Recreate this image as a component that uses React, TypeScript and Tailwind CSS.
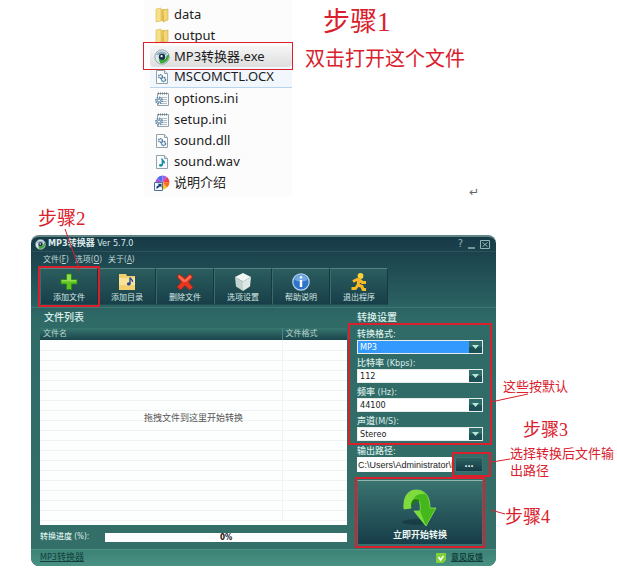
import type { ReactNode } from "react";
import clsx from "clsx";

const RED = "#d9202c";

function FolderIcon() {
  return (
    <svg width="16" height="16" viewBox="0 0 16 16">
      <path d="M2 2l5-1v13l-5 1z" fill="#f6e08a" stroke="#d9b84f" strokeWidth=".6" />
      <path d="M7 2h4v12H7z" fill="#e9c65c" />
      <path d="M9 3l5-1v11l-5 2z" fill="#f3d676" stroke="#d0a944" strokeWidth=".6" />
      <path d="M8 9l2-1v6H8z" fill="#dcb850" />
    </svg>
  );
}

function ConverterIcon({ size = 16 }: { size?: number }) {
  return (
    <svg width={size} height={size} viewBox="0 0 16 16">
      <circle cx="8" cy="8" r="7.2" fill="#dfe9ef" stroke="#8799a6" strokeWidth=".8" />
      <path d="M2 6a6.5 6.5 0 0 1 11-1l-3 2-5-1z" fill="#8fb0bf" />
      <circle cx="8" cy="8" r="3.2" fill="#17324a" />
      <circle cx="7.6" cy="7.2" r="1.1" fill="#fff" />
      <path d="M14.8 5c.8 5-2 9-7.5 9.6L6 13l2.500-2c2.500 0 4-1.500 3.800-4z" fill="#3ba936" />
      <path d="M6.500 14.500L4.500 10.500l5 .5z" fill="#3ba936" />
    </svg>
  );
}

function SheetIcon({ children }: { children: ReactNode }) {
  return (
    <svg width="16" height="16" viewBox="0 0 16 16">
      <path d="M2.500 1.500h8l3 3v10h-11z" fill="#fafcfd" stroke="#93a1ad" />
      <path d="M10.500 1.500v3h3" fill="#dbe3e9" stroke="#93a1ad" />
      {children}
    </svg>
  );
}

function GearsIcon() {
  return (
    <SheetIcon>
      <circle cx="6.500" cy="7.500" r="1.800" fill="none" stroke="#5a83a6" strokeWidth="1.500" strokeDasharray="1.3 .5" />
      <circle cx="9.500" cy="10.500" r="2" fill="none" stroke="#3f719c" strokeWidth="1.500" strokeDasharray="1.3 .5" />
    </SheetIcon>
  );
}

function IniIcon() {
  return (
    <svg width="16" height="16" viewBox="0 0 16 16">
      <path d="M3.500 2.500h11v12h-11z" fill="#f7fafb" stroke="#93a1ad" />
      <path d="M4 2.500h10" stroke="#6d7a85" strokeWidth="2" strokeDasharray="1 1" />
      <path d="M6 6.500h7M6 8.500h7M6 10.500h7M6 12.500h7" stroke="#b3bec7" />
      <circle cx="5" cy="9.500" r="3" fill="#e5edf3" stroke="#6089a9" strokeWidth="2" strokeDasharray="1.4 .9" />
      <circle cx="5" cy="9.500" r="1.500" fill="#fff" stroke="#6089a9" />
    </svg>
  );
}

function WavIcon() {
  return (
    <SheetIcon>
      <path d="M7.500 4.500c.5 2 3.300 2 2.800 5-.4-1.500-1.300-2-2-2.200v3.900" fill="none" stroke="#178ba8" strokeWidth="1.400" />
      <ellipse cx="6.800" cy="11.300" rx="1.800" ry="1.400" fill="#178ba8" />
    </SheetIcon>
  );
}

function ShortcutIcon() {
  return (
    <svg width="16" height="16" viewBox="0 0 16 16">
      <path d="M8.500 7.500V.5A7 7 0 0 1 13 2z" fill="#a65be0" />
      <path d="M8.500 7.500V.5a7 7 0 0 0-5.500 3z" fill="#4c6ff0" />
      <path d="M8.500 7.500L13 2a7 7 0 0 1 2.500 5z" fill="#f23a4a" />
      <path d="M8.500 7.500l7-.5a7 7 0 0 1-2.500 5.500z" fill="#ff6a1f" />
      <path d="M8.500 7.500l4.500 5a7 7 0 0 1-5 2z" fill="#ffc21d" />
      <path d="M8.500 7.500L3 3.500a7 7 0 0 0-1.500 4z" fill="#b04be0" />
      <path d="M.5 7.500h8v8h-8z" fill="#f4f8fc" stroke="#4d6f9d" />
      <path d="M2.500 14v-2.500L5 10 3.500 8.800h4v4L6.200 11.300z" fill="#143c86" />
    </svg>
  );
}

function AddIcon() {
  return (
    <svg width="18" height="18" viewBox="0 0 18 18">
      <path d="M6.500 1h5v5.500h5.500v4.500h-5.500v5.500h-5v-5.500H1V6.500h5.500z" fill="#5fc324" stroke="#2b8a12" strokeWidth=".8" />
      <path d="M7 1.500h4V7h5.500v1.500h-15V7H7z" fill="#a6e75f" opacity=".7" />
    </svg>
  );
}

function AddFolderIcon() {
  return (
    <svg width="18" height="18" viewBox="0 0 18 18">
      <path d="M1 1h7l1 2h8v14H1z" fill="#f1cf6c" />
      <path d="M1 5h16v12H1z" fill="#fbe49a" />
      <path d="M1 12h16v5H1z" fill="#eec75a" opacity=".7" />
      <path d="M12 4.500c.5 2 3 2 2.500 4.500M12 4.500v6" fill="none" stroke="#23479b" strokeWidth="1.400" />
      <ellipse cx="10.800" cy="10.800" rx="2" ry="1.600" fill="#23479b" />
    </svg>
  );
}

function DeleteIcon() {
  return (
    <svg width="18" height="18" viewBox="0 0 18 18">
      <path d="M3 1l6 4.500L14 1l3 3-4.500 5 4.500 5.500-3.500 2.500L9 12.500 4.500 17 1 14l4.500-5L1 4z" fill="#e8361f" stroke="#a81c10" strokeWidth=".6" />
      <path d="M3 2l6 5 5-5 1.500 2-5.500 5H7L2.500 4z" fill="#ff8568" opacity=".7" />
    </svg>
  );
}

function OptionsIcon() {
  return (
    <svg width="18" height="18" viewBox="0 0 18 18">
      <path d="M9 0l8 4-8 4.500L1 4z" fill="#f2f6f5" />
      <path d="M1 4l8 4.500V18l-7-4.500z" fill="#c4d2d0" />
      <path d="M17 4L9 8.500V18l7-4.500z" fill="#dfe8e6" />
    </svg>
  );
}

function InfoIcon() {
  return (
    <svg width="18" height="18" viewBox="0 0 18 18">
      <circle cx="9" cy="9" r="8.200" fill="#2e74c8" stroke="#b9d6f0" strokeWidth="1.200" />
      <path d="M2.500 7a6.700 6.700 0 0 1 13 0q-6 3-13 0z" fill="#8dbcec" opacity=".7" />
      <path d="M9 3.200v2.200M9 7v7" stroke="#fff" strokeWidth="2.400" />
    </svg>
  );
}

function ExitIcon() {
  return (
    <svg width="18" height="18" viewBox="0 0 18 18">
      <circle cx="10.500" cy="3" r="2.900" fill="#ffd23c" />
      <path d="M3 8.500L7 6.500l3 1 2.500 2h3.500M9 7l-1 5 4 1.500 1 3h3M8 12l-2.500 3.500H1.500" fill="none" stroke="#fbb923" strokeWidth="3" strokeLinejoin="round" />
    </svg>
  );
}

function StartArrow() {
  return (
    <svg width="36" height="38" viewBox="0 0 36 38">
      <ellipse cx="14" cy="33" rx="14" ry="3" fill="#12343b" opacity=".6" />
      <path d="M2 20C1 8 6 1 14 1c10 0 14 7 14 18h6L24 37 12 22h6c1-8-1-12-4-12-4 0-5 4-5 9z" fill="#44b81b" stroke="#8fe355" strokeWidth=".8" />
      <path d="M2 20C1 8 6 1 14 1c4 0 7 1.500 9 4.500C17 4 13 6 11 11c-2 2-2 5-2 8z" fill="#7fdc3c" />
      <path d="M9 19c0-6 1-9 5-9 2 0 3 1 3.500 3-4-1.500-6 1-8.500 6z" fill="#1f7a12" />
      <path d="M24 37L12 22h6z" fill="#78dd3d" />
    </svg>
  );
}

const files: { name: string; icon: ReactNode; look?: "picked" | "hovered" }[] = [
  { name: "data", icon: <FolderIcon /> },
  { name: "output", icon: <FolderIcon /> },
  { name: "MP3转换器.exe", icon: <ConverterIcon />, look: "picked" },
  { name: "MSCOMCTL.OCX", icon: <GearsIcon />, look: "hovered" },
  { name: "options.ini", icon: <IniIcon /> },
  { name: "setup.ini", icon: <IniIcon /> },
  { name: "sound.dll", icon: <GearsIcon /> },
  { name: "sound.wav", icon: <WavIcon /> },
  { name: "说明介绍", icon: <ShortcutIcon /> },
];

const tools = [
  { name: "添加文件", icon: <AddIcon />, marked: true },
  { name: "添加目录", icon: <AddFolderIcon /> },
  { name: "删除文件", icon: <DeleteIcon /> },
  { name: "选项设置", icon: <OptionsIcon /> },
  { name: "帮助说明", icon: <InfoIcon /> },
  { name: "退出程序", icon: <ExitIcon /> },
];

const settings = [
  { id: "format", label: "转换格式:", options: ["MP3", "WAV", "WMA", "OGG"], active: true },
  { id: "bitrate", label: "比特率 (Kbps):", options: ["112", "128", "192", "320"] },
  { id: "frequency", label: "频率 (Hz):", options: ["44100", "22050", "48000"] },
  { id: "channel", label: "声道(M/S):", options: ["Stereo", "Mono"] },
];

function Step({ n, className }: { n: number; className?: string }) {
  return (
    <h2 className={clsx("font-['Liberation_Serif','Noto_Sans_CJK_SC',serif] font-normal whitespace-nowrap text-[#d9202c]", className)}>
      步骤{n}
    </h2>
  );
}

function FileList() {
  return (
    <ul className="w-[148px] shrink-0 bg-[#fcfcfc] pt-1 pb-1 font-['Noto_Sans','Noto_Sans_CJK_SC',sans-serif] text-[13px] text-[#1c1c1c]">
      {files.map((f) => (
        <li
          key={f.name}
          className={clsx(
            "relative ml-[6px] flex h-[21px] items-center gap-1 pl-1 whitespace-nowrap",
            f.look === "picked" && "z-10 rounded-sm bg-linear-to-b from-[#f6f6f6] to-[#dedede]",
            f.look === "hovered" && "border-b border-[#b9d5ee] bg-[#f1f7fd]",
          )}
        >
          {f.icon}
          <span>{f.name}</span>
          {f.look === "picked" && <span className="absolute -top-1 -right-px -bottom-[3px] -left-[7px] border border-[#d9202c]" />}
        </li>
      ))}
    </ul>
  );
}

function Toolbar() {
  return (
    <div className="flex h-[41px] items-center pl-[9px]">
      {tools.map((t) => (
        <button
          key={t.name}
          className={clsx(
            "relative flex h-[37px] w-[58px] flex-col items-center justify-between border border-t-[#54827f] border-r-[#16393f] border-b-[#214e51] border-l-[#3b6a6b] bg-linear-to-b from-[#2b5d5e] to-[#183f49] pt-1 text-[8px] leading-[13px] text-[#d5e8e3]",
            t.marked && "z-10",
          )}
        >
          {t.icon}
          <span>{t.name}</span>
          {t.marked && <span className="absolute -inset-[3px] border-2 border-[#d9202c]" />}
        </button>
      ))}
    </div>
  );
}

function FileTable() {
  return (
    <div className="relative flex-1 bg-[#fdfefe]">
      <table className="w-full table-fixed border-collapse">
        <thead>
          <tr className="h-3 bg-linear-to-b from-[#37766f] to-[#1b454c] text-left text-[8px] leading-3 text-[#b9d5d0]">
            <th className="p-0 pl-[3px] font-normal">文件名</th>
            <th className="w-[65px] border-l border-[#4c8580] p-0 pl-[3px] font-normal">文件格式</th>
          </tr>
        </thead>
        <tbody>
          {Array.from({ length: 18 }, (_, i) => (
            <tr key={i} className="h-[10px] border-b border-[#f0f3f3]">
              <td className="p-0" />
              <td className="border-l border-[#f0f3f3] p-0" />
            </tr>
          ))}
        </tbody>
      </table>
      <p className="absolute inset-x-0 top-[84px] text-center text-[9px] leading-3 text-[#555]">拖拽文件到这里开始转换</p>
    </div>
  );
}

function Settings() {
  return (
    <div className="flex w-[126px] shrink-0 flex-col pb-1">
      <h3 className="h-5 text-[10px] leading-5 font-medium text-[#dcefe9]">转换设置</h3>
      <div className="relative flex flex-col gap-[3px]">
        {settings.map((s) => (
          <div key={s.id}>
            <label htmlFor={s.id} className="block h-3 text-[9px] leading-3 font-medium text-[#d9ede8]">
              {s.label}
            </label>
            <div className="relative">
              <select
                id={s.id}
                className={clsx(
                  "block h-[14px] w-full appearance-none border border-[#e5ecea] pr-4 pl-[2px] text-[9px] leading-3",
                  s.active ? "bg-[#3399ff] text-white" : "bg-white text-[#222]",
                )}
              >
                {s.options.map((o) => (
                  <option key={o}>{o}</option>
                ))}
              </select>
              <svg className="pointer-events-none absolute top-px right-px" width="13" height="12" viewBox="0 0 13 12">
                <path d="M0 0h13v12H0z" fill="#1d5055" />
                <path d="M0 0h13v6H0z" fill="#2f6b69" />
                <path d="M3 4h7L6.500 8z" fill="#b9e5d4" />
              </svg>
            </div>
          </div>
        ))}
        <span className="pointer-events-none absolute -inset-x-[9px] -top-[5px] -bottom-[4px] border-2 border-[#d9202c]" />
      </div>
      <label htmlFor="path" className="mt-1 block h-3 text-[9px] leading-3 font-medium text-[#d9ede8]">
        输出路径:
      </label>
      <div className="flex h-[15px] justify-between">
        <input
          id="path"
          className="h-[15px] w-[95px] bg-white pl-px font-['Liberation_Sans',sans-serif] text-[9px] text-[#222]"
          defaultValue="C:\Users\Administrator\Desktop"
        />
        <button className="relative h-[15px] w-7 border border-[#3f7371] bg-linear-to-b from-[#2d6262] to-[#153b45] text-[9px] leading-[11px] font-bold text-white">
          ...
          <span className="absolute -inset-y-[6px] -right-[9px] -left-1 border-2 border-[#d9202c]" />
        </button>
      </div>
      <button className="relative mt-2 flex h-[65px] flex-col items-center justify-end border border-[#3b6e6e] border-t-[#8fb5ae] bg-linear-to-b from-[#3a7470] to-[#173d49] text-[9px] leading-[17px] font-bold text-[#eef8f5]">
        <StartArrow />
        立即开始转换
        <span className="absolute -inset-x-[3px] -inset-y-[4px] border-2 border-[#d9202c]" />
      </button>
    </div>
  );
}

function ConverterWindow() {
  return (
    <section className="min-w-[465px] flex-1 overflow-hidden rounded-lg border-t-2 border-[#5f8585] bg-linear-to-b from-[#173a47] via-[#2f6a67] via-25% to-[#356f69] font-['DejaVu_Sans_Condensed','Noto_Sans_CJK_SC',sans-serif]">
      <header className="flex h-[15px] items-center gap-[2px] border-b border-[#2a5459] pr-[6px] pl-1 text-[9px] text-[#dbe8e8]">
        <ConverterIcon size={11} />
        <h1 className="flex-1">
          <span className="font-bold">MP3转换器</span> Ver 5.7.0
        </h1>
        <div className="flex gap-1 text-[#8fb5b3]">
          <button aria-label="帮助" className="text-[11px] leading-3">?</button>
          <button aria-label="最小化">
            <svg width="9" height="10" viewBox="0 0 9 10"><path d="M1 9h7" stroke="currentColor" strokeWidth="1.500" /></svg>
          </button>
          <button aria-label="关闭">
            <svg width="10" height="10" viewBox="0 0 10 10" fill="none" stroke="currentColor"><path d="M.5 1.500h9v8h-9zM2.500 3.500l5 4M7.500 3.500l-5 4" /></svg>
          </button>
        </div>
      </header>
      <nav className="flex h-[14px] gap-[6px] pl-3 text-[8px] leading-[13px] text-[#c3d8d6]">
        <button>文件(<u>F</u>)</button>
        <button>选项(<u>O</u>)</button>
        <button>关于(<u>A</u>)</button>
      </nav>
      <Toolbar />
      <div className="flex gap-[10px] border-t border-[#3f7773] pr-[13px] pl-[9px]">
        <div className="flex min-w-0 flex-1 flex-col">
          <h3 className="h-5 pl-1 text-[10px] leading-5 font-medium text-[#dcefe9]">文件列表</h3>
          <FileTable />
          <div className="flex h-6 items-center gap-2 text-[8px] font-medium text-[#dcefe9]">
            <span className="w-[57px] whitespace-nowrap">转换进度 (%):</span>
            <div role="progressbar" aria-valuenow={0} className="h-[9px] flex-1 bg-white text-center text-[8px] leading-[9px] font-bold text-[#111]">
              0%
            </div>
          </div>
        </div>
        <Settings />
      </div>
      <footer className="flex h-[17px] items-center justify-between border-t border-[#4f9386] bg-linear-to-b from-[#3c8276] to-[#499182] pr-[13px] pl-[9px] text-[9px] text-[#123f3c]">
        <a href="#home" className="underline">MP3转换器</a>
        <a href="#feedback" className="flex items-center gap-[5px] text-[8px] font-bold underline">
          <svg width="10" height="10" viewBox="0 0 10 10">
            <path d="M0 0h10v7l-3 3H0z" fill="#7fd13a" />
            <path d="M2.500 4l2 3 3-4" fill="none" stroke="#fff" strokeWidth="1.600" />
          </svg>
          意见反馈
        </a>
      </footer>
    </section>
  );
}

export default function App() {
  return (
    <main lang="zh-CN" className="min-h-[575px] bg-white">
      <div className="flex h-[197px] pl-36">
        <FileList />
        <div className="flex flex-1 flex-col pt-1 pl-[13px]">
          <Step n={1} className="pl-[18px] text-[27px] leading-9" />
          <p className="pt-[7px] font-['Liberation_Serif','Noto_Sans_CJK_SC',serif] text-[20px] leading-6 whitespace-nowrap text-[#d9202c]">双击打开这个文件</p>
          <span className="mt-auto pl-[164px] font-['DejaVu_Sans',sans-serif] text-[12px] leading-[10px] text-[#666]">↵</span>
        </div>
      </div>
      <div className="relative pt-3 pb-[6px] pl-[38px]">
        <Step n={2} className="text-[19px] leading-5" />
        <svg className="absolute top-[31px] left-16 z-20" width="18" height="44" viewBox="0 0 18 44">
          <path d="M1 1l15 42" stroke={RED} />
        </svg>
      </div>
      <div className="flex pl-[31px]">
        <ConverterWindow />
        <aside className="relative w-[121px] shrink-0 pt-[143px] font-['Liberation_Serif','Noto_Sans_CJK_SC',serif] text-[13px] leading-[17px] text-[#d9202c]">
          <p className="pl-[7px]">这些按默认</p>
          <Step n={3} className="pt-[25px] pl-[27px] text-[18px] leading-5" />
          <p className="pt-[5px] pl-[14px]">
            <span className="block whitespace-nowrap">选择转换后文件输</span>
            <span className="block">出路径</span>
          </p>
          <Step n={4} className="pt-7 pl-[9px] text-[18px] leading-5" />
          <svg className="absolute top-[155px] -left-[10px]" width="45" height="130" viewBox="0 0 45 130" fill="none" stroke={RED}>
            <path d="M5 12l37-8M6 72l18-3M5 120l14 4" />
          </svg>
        </aside>
      </div>
    </main>
  );
}
